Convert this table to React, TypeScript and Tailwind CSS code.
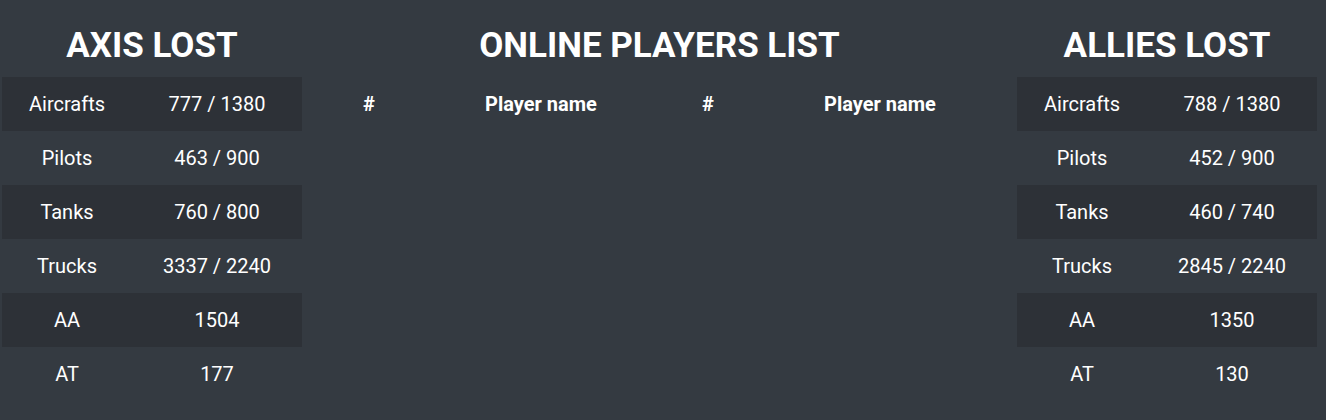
const axis = [
  ['Aircrafts', '777 / 1380'],
  ['Pilots', '463 / 900'],
  ['Tanks', '760 / 800'],
  ['Trucks', '3337 / 2240'],
  ['AA', '1504'],
  ['AT', '177'],
];

const allies = [
  ['Aircrafts', '788 / 1380'],
  ['Pilots', '452 / 900'],
  ['Tanks', '460 / 740'],
  ['Trucks', '2845 / 2240'],
  ['AA', '1350'],
  ['AT', '130'],
];

function Heading({ children }: { children: React.ReactNode }) {
  return (
    <div className="pt-4 pb-px">
      <h2 className="text-center text-[35px] leading-[60px] font-bold text-white">{children}</h2>
    </div>
  );
}

function LossTable({ title, rows }: { title: string; rows: string[][] }) {
  return (
    <div className="w-[300px] shrink-0">
      <Heading>{title}</Heading>
      <div className="flex flex-col">
        {rows.map(([label, value], i) => (
          <div
            key={label}
            className={`flex h-[54px] items-center text-[20px] text-white ${i % 2 === 0 ? 'bg-[#2d3137]' : ''}`}
          >
            <div className="w-[130px] text-center">{label}</div>
            <div className="flex-1 text-center">{value}</div>
          </div>
        ))}
      </div>
    </div>
  );
}

export default function App() {
  return (
    <div
      className="min-h-[420px] bg-[#343a41] flex pl-[2px] pr-[9px]"
      style={{ fontFamily: 'Roboto, "Liberation Sans", sans-serif' }}
    >
      <LossTable title="AXIS LOST" rows={axis} />

      <div className="flex-1">
        <Heading>ONLINE PLAYERS LIST</Heading>
        <div className="flex h-[54px] items-center text-[20px] font-bold text-white">
          <div className="w-[134px] text-center">#</div>
          <div className="w-[210px] text-center">Player name</div>
          <div className="w-[124px] text-center">#</div>
          <div className="w-[220px] text-center">Player name</div>
        </div>
      </div>

      <LossTable title="ALLIES LOST" rows={allies} />
    </div>
  );
}
